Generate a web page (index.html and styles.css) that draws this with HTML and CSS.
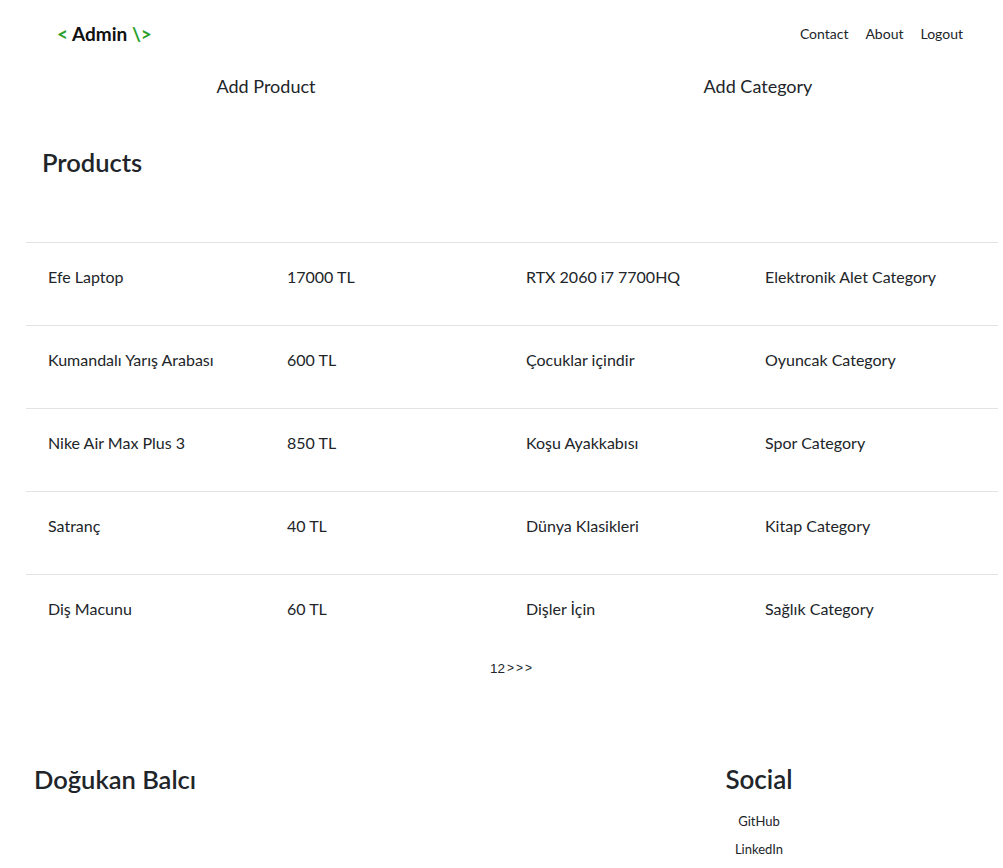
FILE: index.html
```html
<!DOCTYPE html>
<html>
<head>
<meta charset="utf-8">
<link rel="stylesheet" href="styles.css">
</head>
<body>
<header class="topbar">
  <a class="logo"><span class="g">&lt;</span> Admin <span class="g">\&gt;</span></a>
  <nav class="nav">
    <a>Contact</a>
    <a>About</a>
    <a>Logout</a>
  </nav>
</header>
<main class="main">
  <div class="actions">
    <a class="action">Add Product</a>
    <a class="action">Add Category</a>
  </div>
  <h2 class="title">Products</h2>
  <table class="tbl">
    <tr><td>Efe Laptop</td><td>17000 TL</td><td>RTX 2060 i7 7700HQ</td><td>Elektronik Alet Category</td></tr>
    <tr><td>Kumandalı Yarış Arabası</td><td>600 TL</td><td>Çocuklar içindir</td><td>Oyuncak Category</td></tr>
    <tr><td>Nike Air Max Plus 3</td><td>850 TL</td><td>Koşu Ayakkabısı</td><td>Spor Category</td></tr>
    <tr><td>Satranç</td><td>40 TL</td><td>Dünya Klasikleri</td><td>Kitap Category</td></tr>
    <tr><td>Diş Macunu</td><td>60 TL</td><td>Dişler İçin</td><td>Sağlık Category</td></tr>
  </table>
  <div class="pager"><a>1</a><a>2</a><a class="chev">&gt;</a><a class="chev">&gt;</a><a class="chev">&gt;</a></div>
</main>
<footer class="footer">
  <div class="fleft"><h3 class="ftitle">Doğukan Balcı</h3></div>
  <div class="fright">
    <h3 class="ftitle">Social</h3>
    <a class="flink">GitHub</a>
    <a class="flink">LinkedIn</a>
  </div>
</footer>
</body>
</html>
```
FILE: styles.css
```css
* { box-sizing: border-box; }
body {
  margin: 0;
  font-family: "Lato", "Noto Sans", sans-serif;
  color: #212529;
  background: #fff;
  width: 1003px;
}
a { color: #212529; text-decoration: none; }
.topbar {
  display: flex;
  justify-content: space-between;
  align-items: center;
  height: 66px;
  padding: 0 40px 0 57px;
}
.logo { font-size: 19px; font-weight: 700; color: #111; }
.logo .g { color: #2aa02a; }
.nav { display: flex; gap: 17px; font-size: 14px; }
.main { padding: 0 5px 0 26px; }
.actions { display: grid; grid-template-columns: 1fr 1fr; width: 984px; margin-left: -6px; height: 40px; align-items: center; }
.action { text-align: center; font-size: 18px; }
.title { font-size: 25.5px; font-weight: 600; margin: 40px 0 0 16px; line-height: 1.3; height: 96px; }
.tbl { width: 972px; border-collapse: collapse; font-size: 16px; table-layout: fixed; }
.tbl td { border-top: 1px solid #e3e3e3; height: 83px; padding: 0 0 16px 22px; vertical-align: middle; width: 239px; }
.tbl td:last-child { width: 255px; }
.pager { display: flex; justify-content: center; font-size: 13.5px; margin-top: 3px; padding-right: 2px; font-family: "Liberation Sans", sans-serif; }
.pager .chev { margin-left: 2px; font-size: 12px; }
.footer { display: flex; margin-top: 88px; }
.fleft { width: 726px; padding-left: 34px; }
.fright { display: flex; flex-direction: column; align-items: center; width: 66px; }
.ftitle { font-size: 26px; font-weight: 600; margin: 0 0 12px; line-height: 1.2; white-space: nowrap; }
.fleft .ftitle { font-size: 25.5px; }
.flink { font-size: 13px; line-height: 28px; }
```
